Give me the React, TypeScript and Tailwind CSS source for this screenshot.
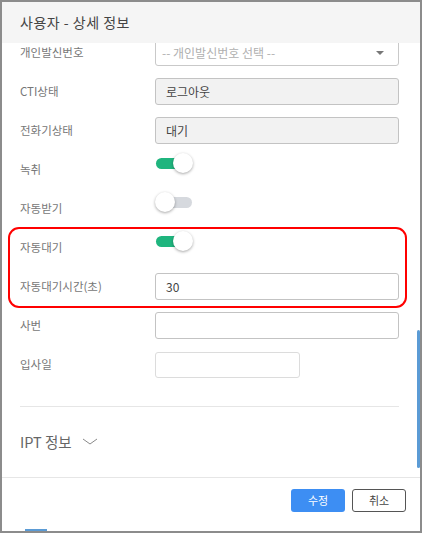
import React from 'react'

const font = { fontFamily: '"Noto Sans CJK KR", "Noto Sans", sans-serif' }

function Toggle({ on }: { on: boolean }) {
  return (
    <div className="relative w-[38px] h-[20px] -mt-[3px] self-start">
      <div
        className={
          'absolute left-[1px] top-[5px] w-[36px] h-[11px] rounded-full ' +
          (on ? 'bg-[#1fb57e]' : 'bg-[#d6d9de]')
        }
      />
      <div
        className={
          'absolute top-0 w-[20px] h-[20px] rounded-full bg-white shadow-[0_1px_3px_rgba(0,0,0,0.35)] ' +
          (on ? 'left-[18px]' : 'left-0')
        }
      />
    </div>
  )
}

function Row({ label, children }: { label: string; children: React.ReactNode }) {
  return (
    <div className="flex items-center h-[27px]">
      <div className="w-[135px] shrink-0 text-[11.5px] text-[#777]">{label}</div>
      {children}
    </div>
  )
}

export default function App() {
  return (
    <div
      className="relative w-[422px] h-[533px] border-2 border-[#8c8c8c] bg-white flex flex-col overflow-hidden"
      style={font}
    >
      <div className="h-[41px] shrink-0 bg-[#f5f5f5] flex items-center px-[18px] z-10">
        <span className="text-[14px] text-[#444] tracking-[0.5px]">사용자 - 상세 정보</span>
      </div>

      <div className="h-[434px] shrink-0 overflow-hidden">
        <div className="-mt-[4px] pl-[18px] pr-[21px] flex flex-col gap-[12px]">
          <Row label="개인발신번호">
            <div className="flex-1 h-full border border-[#c9c9c9] rounded-[3px] flex items-center justify-between px-[6px] text-[12px] text-[#b0b0b0]">
              <span>-- 개인발신번호 선택 --</span>
              <span className="w-0 h-0 border-l-[4px] border-r-[4px] border-t-[4px] border-l-transparent border-r-transparent border-t-[#777] mr-[8px]" />
            </div>
          </Row>
          <Row label="CTI상태">
            <div className="flex-1 h-full border border-[#c3c3c3] rounded-[3px] bg-[#f2f2f2] flex items-center px-[10px] text-[12px] text-[#444]">
              로그아웃
            </div>
          </Row>
          <Row label="전화기상태">
            <div className="flex-1 h-full border border-[#c3c3c3] rounded-[3px] bg-[#f2f2f2] flex items-center px-[10px] text-[12px] text-[#444]">
              대기
            </div>
          </Row>
          <Row label="녹취">
            <Toggle on />
          </Row>
          <Row label="자동받기">
            <Toggle on={false} />
          </Row>
          <Row label="자동대기">
            <Toggle on />
          </Row>
          <Row label="자동대기시간(초)">
            <div className="flex-1 h-full border border-[#c3c3c3] rounded-[3px] bg-white flex items-center px-[10px] text-[12px] text-[#444]">
              30
            </div>
          </Row>
          <Row label="사번">
            <div className="flex-1 h-full border border-[#c3c3c3] rounded-[3px] bg-white" />
          </Row>
          <Row label="입사일">
            <div className="w-[145px] h-[26px] border border-[#dcdcdc] rounded-[3px] bg-white" />
          </Row>
        </div>

        <div className="mx-[18px] mr-[21px] mt-[28px] border-t border-[#e6e6e6]" />
        <div className="pl-[18px] mt-[24px] flex items-center gap-[10px]">
          <span className="text-[14.5px] text-[#666]">IPT 정보</span>
          <svg width="16" height="8" viewBox="0 0 16 8" fill="none" className="mt-[1px]">
            <path d="M1 1l7 5 7-5" stroke="#8a8a8a" strokeWidth="1" />
          </svg>
        </div>
      </div>

      <div className="flex-1 border-t border-[#e6e6e6] flex justify-end items-start pt-[11px] pr-[14px] gap-[7px]">
        <button className="w-[54px] h-[23px] rounded-[3px] bg-[#3d8ef3] text-white text-[11px]">수정</button>
        <button className="w-[54px] h-[23px] rounded-[3px] border-[1.5px] border-[#555] bg-white text-[#444] text-[11px]">
          취소
        </button>
      </div>

      {/* scrollbar thumb */}
      <div className="absolute right-0 top-[328px] w-[3px] h-[138px] rounded-full bg-[#5b9bd5]" />
      <div className="absolute left-[23px] bottom-0 w-[22px] h-[2px] bg-[#5b9bd5]" />

      {/* highlight annotation */}
      <div className="absolute left-[6px] top-[225px] w-[399px] h-[81px] border-2 border-[#ff0000] rounded-[11px] pointer-events-none" />
    </div>
  )
}
